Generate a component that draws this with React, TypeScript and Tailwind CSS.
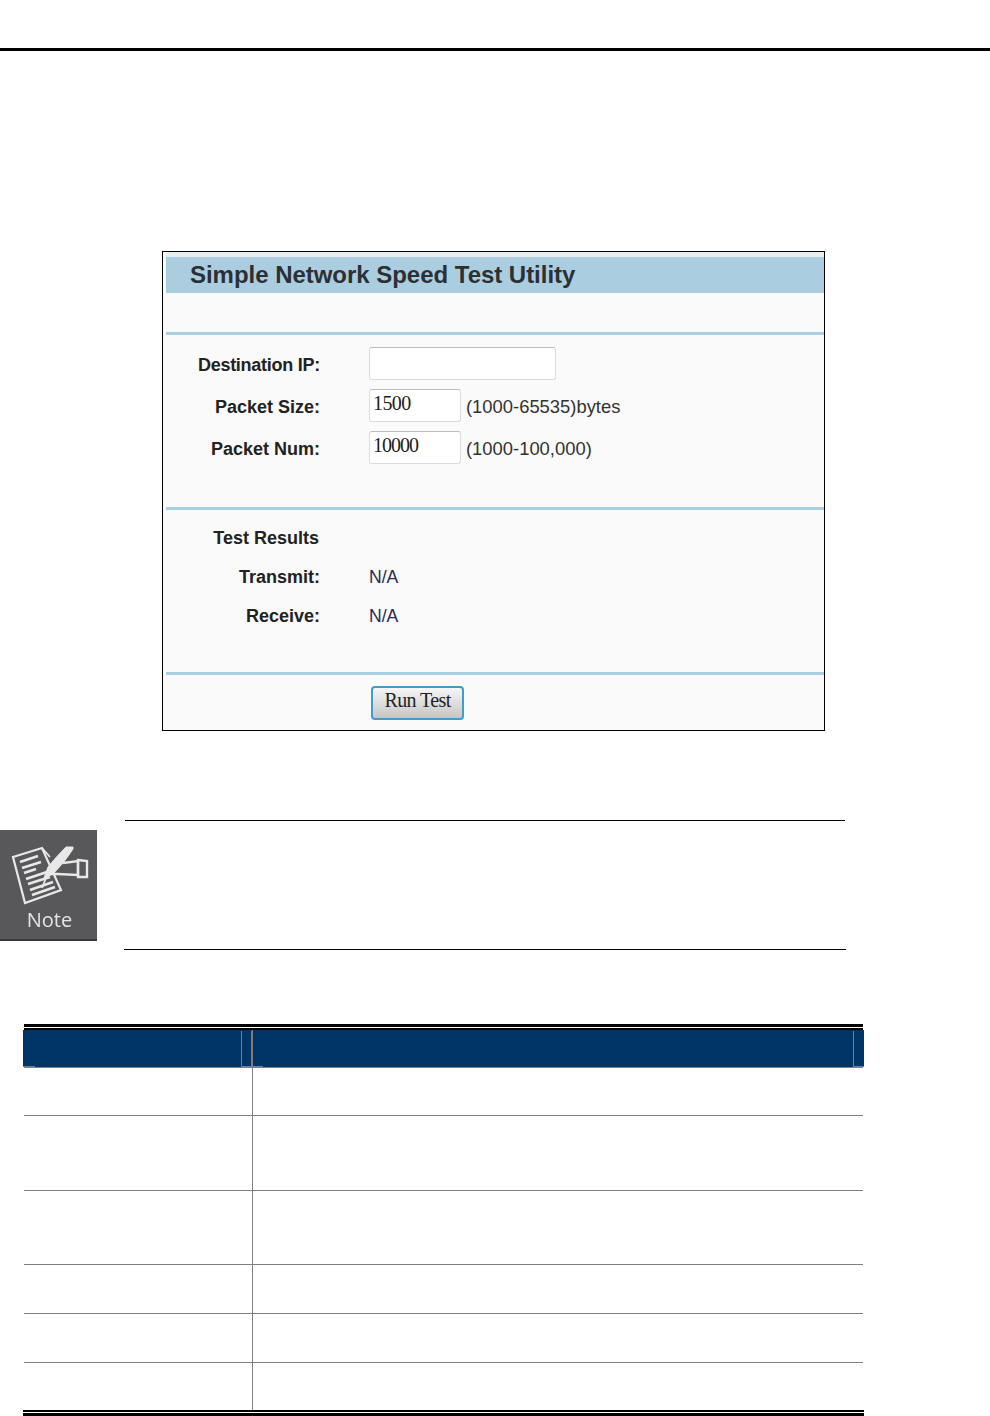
const labelClass = "w-[154px] text-right font-bold text-[18px] text-[#222] relative top-[1px]";
const formLabel = "w-[154px] text-right font-bold text-[18px] text-[#222] relative top-[2px]";
const hintClass = "ml-[5px] mt-[2px] text-[18.4px] text-[#333]";
const numClass = "ml-[49px] w-[92px] h-[33px] bg-white border border-[#dcdcdc] border-t-[#bdbdbd] rounded-[3px] pl-[3px] pb-[6px] flex items-center font-['Liberation_Serif',serif] text-[20px] text-[#222]";
const hr = "h-[3px] bg-[#aacfe3]";

function NoteIcon() {
  return (
    <svg viewBox="0 0 97 78" className="w-[97px] h-[78px] block blur-[0.4px]" fill="none" stroke="#e8e8e8">
      <path d="M13 27 L42 18 L61 60 L25 73 Z" strokeWidth="2.2" fill="#58585a" />
      <path d="M20 32 L38 26 M22 38 L41 32 M24 43 L36 39 M26 49 L47 42 M28 54 L50 47 M30 60 L53 52 M32 65 L55 57" strokeWidth="2.6" />
      <path d="M73 17 L66 17 Q56 27 48 37 L44 48 L53 44 Q65 32 73 19 Z" fill="#e8e8e8" strokeWidth="1" />
      <path d="M42 18 L50 27 M46 48 L42 58" strokeWidth="1.8" />
      <path d="M63 33 L78 31 L78 45 L57 44 L50 44" strokeWidth="2.4" />
      <path d="M78 30 L87 31 L87 47 L78 47 Z" strokeWidth="2.4" />
    </svg>
  );
}

function Row({ h, last }: { h: string; last?: boolean }) {
  return (
    <div className={`grid grid-cols-[228px_1fr] ${h} ${last ? "" : "border-b border-[#808080]"}`}>
      <div />
      <div className="border-l border-[#808080]" />
    </div>
  );
}

export default function App() {
  return (
    <div className="w-[990px] h-[1416px] bg-white overflow-hidden font-['Liberation_Sans',sans-serif]">
      <div className="pt-[48px]">
        <div className="h-[3px] bg-black" />
      </div>

      {/* Screenshot of the utility */}
      <div className="ml-[162px] mt-[200px] w-[663px] h-[480px] border border-black bg-[#fafafa] pl-[3px] flex flex-col">
        <div className="h-[5px] bg-[#e6eef2]" />
        <div className="h-[36px] bg-[#abcde0] pl-[24px] flex items-center">
          <span className="font-bold text-[24px] text-[#2b3034] tracking-[-0.03px]">Simple Network Speed Test Utility</span>
        </div>
        <div className={`mt-[39px] ${hr}`} />

        <div className="mt-[12px] flex flex-col gap-[9px]">
          <div className="flex items-center h-[33px]">
            <div className={`${formLabel} tracking-[-0.26px]`}>Destination IP:</div>
            <div className="ml-[49px] w-[187px] h-[33px] bg-white border border-[#dcdcdc] border-t-[#bdbdbd] rounded-[3px]" />
          </div>
          <div className="flex items-center h-[33px]">
            <div className={formLabel}>Packet Size:</div>
            <div className={`${numClass} tracking-[-0.6px]`}>1500</div>
            <span className={hintClass}>(1000-65535)bytes</span>
          </div>
          <div className="flex items-center h-[33px]">
            <div className={formLabel}>Packet Num:</div>
            <div className={`${numClass} tracking-[-1px]`}>10000</div>
            <span className={hintClass}>(1000-100,000)</span>
          </div>
        </div>

        <div className={`mt-[43px] ${hr}`} />

        <div className="mt-[8px] flex flex-col">
          <div className="flex items-center h-[39px]">
            <div className={`${labelClass} -translate-x-[1px]`}>Test Results</div>
          </div>
          <div className="flex items-center h-[39px]">
            <div className={labelClass}>Transmit:</div>
            <span className="ml-[49px] mt-[2px] text-[17.6px] text-[#2a2a55]">N/A</span>
          </div>
          <div className="flex items-center h-[39px]">
            <div className={labelClass}>Receive:</div>
            <span className="ml-[49px] mt-[2px] text-[17.6px] text-[#2a2a55]">N/A</span>
          </div>
        </div>

        <div className={`mt-[37px] ${hr}`} />

        <div className="mt-[11px] ml-[205px] w-[93px] h-[34px] rounded-[4px] border-2 border-[#3f9ccc] bg-gradient-to-b from-[#f6f6f6] to-[#c6c6c6] flex items-center justify-center pb-[6px] font-['Liberation_Serif',serif] text-[20px] tracking-[-0.6px] text-[#222]">
          Run Test
        </div>
      </div>

      {/* Note */}
      <div className="mt-[89px] flex">
        <div className="w-[124px] pt-[10px]">
          <div className="w-[97px] h-[111px] bg-[#58585a] border-b-2 border-[#3a3a3a] flex flex-col">
            <NoteIcon />
            <div className="pl-[2px] text-center text-[20px] leading-[24px] text-[#e4e4e4] font-['Open_Sans',sans-serif] blur-[0.3px]">Note</div>
          </div>
        </div>
        <div className="w-[722px] h-[130px] flex flex-col justify-between">
          <div className="mx-[1px] h-[1px] bg-black" />
          <div className="h-[1px] bg-black" />
        </div>
      </div>

      {/* Table */}
      <div className="mt-[74px] ml-[24px] w-[839px]">
        <div className="h-[3px] bg-black" />
        <div className="h-[1px] bg-white" />
        <div className="h-[2px] bg-black" />
        <div className="relative -mx-[1px] h-[37px] bg-[#003366]">
          <div className="absolute left-[218px] top-[1px] bottom-0 w-[1px] bg-[#5f82a8]" />
          <div className="absolute left-[228px] top-[1px] bottom-0 w-[1px] bg-[#5f82a8]" />
          <div className="absolute left-[229px] top-0 bottom-0 w-[1px] bg-[#808080]" />
          <div className="absolute left-[830px] top-[1px] bottom-0 w-[1px] bg-[#5f82a8]" />
          <div className="absolute left-0 bottom-0 w-[12px] h-[1px] bg-[#5f82a8]" />
          <div className="absolute left-[218px] bottom-0 w-[22px] h-[1px] bg-[#5f82a8]" />
          <div className="absolute left-[830px] bottom-0 w-[11px] h-[1px] bg-[#5f82a8]" />
        </div>
        <div className="h-[1px] bg-[#808080]" />
        <Row h="h-[48px]" />
        <Row h="h-[75px]" />
        <Row h="h-[74px]" />
        <Row h="h-[49px]" />
        <Row h="h-[49px]" />
        <Row h="h-[47px]" last />
        <div className="-ml-[1px] -mr-[1px]">
          <div className="h-[2px] bg-black" />
          <div className="h-[1px] bg-white" />
          <div className="h-[3px] bg-black" />
        </div>
      </div>
    </div>
  );
}
